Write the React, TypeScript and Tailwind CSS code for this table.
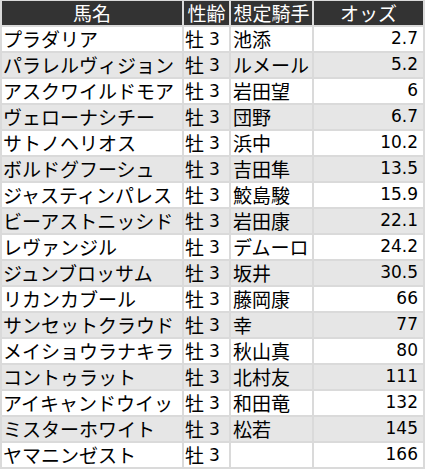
const rows: [string, string, string][] = [
  ["プラダリア", "池添", "2.7"],
  ["パラレルヴィジョン", "ルメール", "5.2"],
  ["アスクワイルドモア", "岩田望", "6"],
  ["ヴェローナシチー", "団野", "6.7"],
  ["サトノヘリオス", "浜中", "10.2"],
  ["ボルドグフーシュ", "吉田隼", "13.5"],
  ["ジャスティンパレス", "鮫島駿", "15.9"],
  ["ビーアストニッシド", "岩田康", "22.1"],
  ["レヴァンジル", "デムーロ", "24.2"],
  ["ジュンブロッサム", "坂井", "30.5"],
  ["リカンカブール", "藤岡康", "66"],
  ["サンセットクラウド", "幸", "77"],
  ["メイショウラナキラ", "秋山真", "80"],
  ["コントゥラット", "北村友", "111"],
  ["アイキャンドウイット", "和田竜", "132"],
  ["ミスターホワイト", "松若", "145"],
  ["ヤマニンゼスト", "", "166"],
];

export default function App() {
  return (
    <div className="w-[425px] h-[471px] bg-white overflow-hidden font-['Noto_Sans_CJK_JP',sans-serif] text-[19px] text-black">
      <table className="w-[425px] table-fixed border-separate border-spacing-[2px] bg-[#dadada] -mt-[1px]">
        <colgroup>
          <col className="w-[180px]" />
          <col className="w-[45px]" />
          <col className="w-[81px]" />
          <col className="w-[109px]" />
        </colgroup>
        <thead>
          <tr className="bg-[#333333] text-white">
            <th className="font-normal p-0">
              <div className="h-[24px] flex items-center justify-center">馬名</div>
            </th>
            <th className="font-normal p-0">
              <div className="h-[24px] flex items-center justify-center">性齢</div>
            </th>
            <th className="font-normal p-0">
              <div className="h-[24px] flex items-center justify-center whitespace-nowrap">想定騎手</div>
            </th>
            <th className="font-normal p-0">
              <div className="h-[24px] flex items-center justify-center">オッズ</div>
            </th>
          </tr>
        </thead>
        <tbody>
          {rows.map(([name, jockey, odds], i) => (
            <tr key={name} className={i % 2 === 0 ? "bg-white" : "bg-[#e6e6e6]"}>
              <td className="p-0">
                <div className="h-[24px] leading-[24px] pl-[1px] break-all overflow-hidden">{name}</div>
              </td>
              <td className="p-0">
                <div className="h-[24px] flex items-center pl-[1px] whitespace-nowrap">
                  <span className="leading-[24px]">牡</span>
                  <span className="font-['DejaVu_Sans',sans-serif] text-[17px] leading-[24px] pl-[5px]">3</span>
                </div>
              </td>
              <td className="p-0">
                <div className="h-[24px] flex items-center pl-[2px] whitespace-nowrap overflow-hidden">{jockey}</div>
              </td>
              <td className="p-0">
                <div className="h-[24px] flex items-center justify-end pr-[5px] font-['DejaVu_Sans',sans-serif] text-[17px]">
                  {odds}
                </div>
              </td>
            </tr>
          ))}
        </tbody>
      </table>
    </div>
  );
}
